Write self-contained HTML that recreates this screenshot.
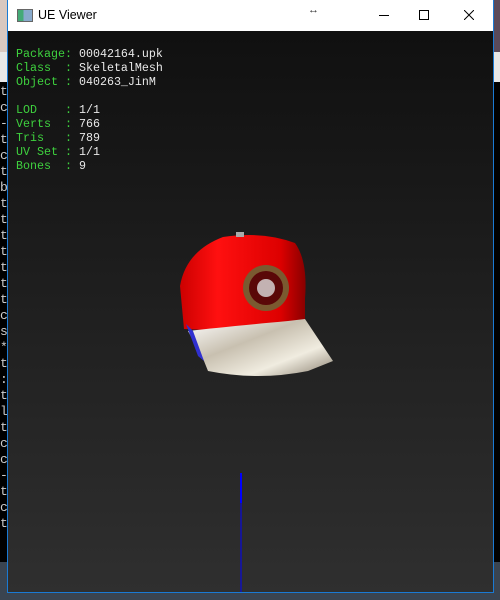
<!DOCTYPE html>
<html><head><style>
*{margin:0;padding:0}
body{width:500px;height:600px;overflow:hidden;background:#000;position:relative;font-family:"Liberation Mono",monospace}
.lc{position:absolute;left:0;width:8px;font-size:13px;color:#ccc;line-height:16px}
#win{position:absolute;left:7px;top:0;width:485px;height:592px;border:1px solid #1a7ad4;border-top:none;background:#fff}
#title{height:31px;position:relative;font-family:"Liberation Sans",sans-serif;font-size:12px;color:#000}
#view{position:absolute;top:31px;left:0;right:0;bottom:0;background:linear-gradient(#101010,#2f2f2f)}
.info{position:absolute;left:8px;font-size:11.67px;line-height:14px;white-space:pre;color:#e8e8e8}
.g{color:#3ed13e}
</style></head><body>
<div style="position:absolute;left:0;top:0;width:8px;height:52px;background:#d9c8c0"></div>
<div style="position:absolute;left:0;top:52px;width:8px;height:30px;background:#e8e8e8"></div>
<div style="position:absolute;right:0;top:0;width:8px;height:52px;background:#5a4a5a"></div>
<div style="position:absolute;right:0;top:52px;width:8px;height:30px;background:#e8e8e8"></div>
<div style="position:absolute;left:0;top:562px;width:500px;height:38px;background:#3a4450"></div>
<div class="lc" style="top:84px">t<br>c<br>-<br>t<br>c<br>t<br>b<br>t<br>t<br>t<br>t<br>t<br>t<br>t<br>c<br>s<br>*<br>t<br>:<br>t<br>l<br>t<br>c<br>c<br>-<br>t<br>c<br>t</div>
<div id="win">
<div id="title">
<div style="position:absolute;left:9px;top:9px;width:14px;height:11px;border:1px solid #666;background:linear-gradient(90deg,#4a7 0 40%,#8ac 40%)"></div>
<div style="position:absolute;left:30px;top:8px;font-size:12.5px">UE Viewer</div>
<div style="position:absolute;left:300px;top:4px;font-size:11px;color:#333">↔</div>
<div style="position:absolute;left:371px;top:15px;width:10px;height:1px;background:#000"></div>
<div style="position:absolute;left:411px;top:10px;width:8px;height:8px;border:1px solid #000"></div>
<svg style="position:absolute;left:456px;top:10px" width="10" height="10"><path d="M0 0L10 10M10 0L0 10" stroke="#000" stroke-width="1"/></svg>
</div>
<div id="view">
<div class="info" style="top:16px"><span class="g">Package:</span> 00042164.upk
<span class="g">Class  :</span> SkeletalMesh
<span class="g">Object :</span> 040263_JinM

<span class="g">LOD    :</span> 1/1
<span class="g">Verts  :</span> 766
<span class="g">Tris   :</span> 789
<span class="g">UV Set :</span> 1/1
<span class="g">Bones  :</span> 9</div>
<svg style="position:absolute;left:0;top:0" width="485" height="561">
<line x1="233" y1="442" x2="233" y2="561" stroke="#0000ff" stroke-width="1"/>
<line x1="233" y1="442" x2="233" y2="472" stroke="#0000ff" stroke-width="2"/>
<defs>
<linearGradient id="r" x1="0" y1="0" x2="1" y2="0"><stop offset="0" stop-color="#c00"/><stop offset=".3" stop-color="#ff1010"/><stop offset=".8" stop-color="#d00"/><stop offset="1" stop-color="#800"/></linearGradient>
<linearGradient id="s" x1="0" y1="0" x2="1" y2="1"><stop offset="0" stop-color="#fff"/><stop offset=".4" stop-color="#c8c0b0"/><stop offset=".7" stop-color="#f0ece0"/><stop offset="1" stop-color="#8a8070"/></linearGradient>
</defs>
<path d="M176 298L172 255Q178 220 215 206Q255 200 287 212Q300 230 297 268L297 290Q260 300 220 300Z" fill="url(#r)"/>
<path d="M180 300Q215 296 280 290L297 288L325 330L300 340Q250 350 200 340L196 330Z" fill="url(#s)"/>
<path d="M178 293L185 300L196 330L190 325Z" fill="#3030d0"/>
<circle cx="258" cy="257" r="23" fill="#7a5a30"/>
<circle cx="258" cy="257" r="17" fill="#5a0808"/>
<circle cx="258" cy="257" r="9" fill="#ddd" opacity=".8"/>
<rect x="228" y="201" width="8" height="5" fill="#aaa"/>
</svg>
</div>
</div>
</body></html>
